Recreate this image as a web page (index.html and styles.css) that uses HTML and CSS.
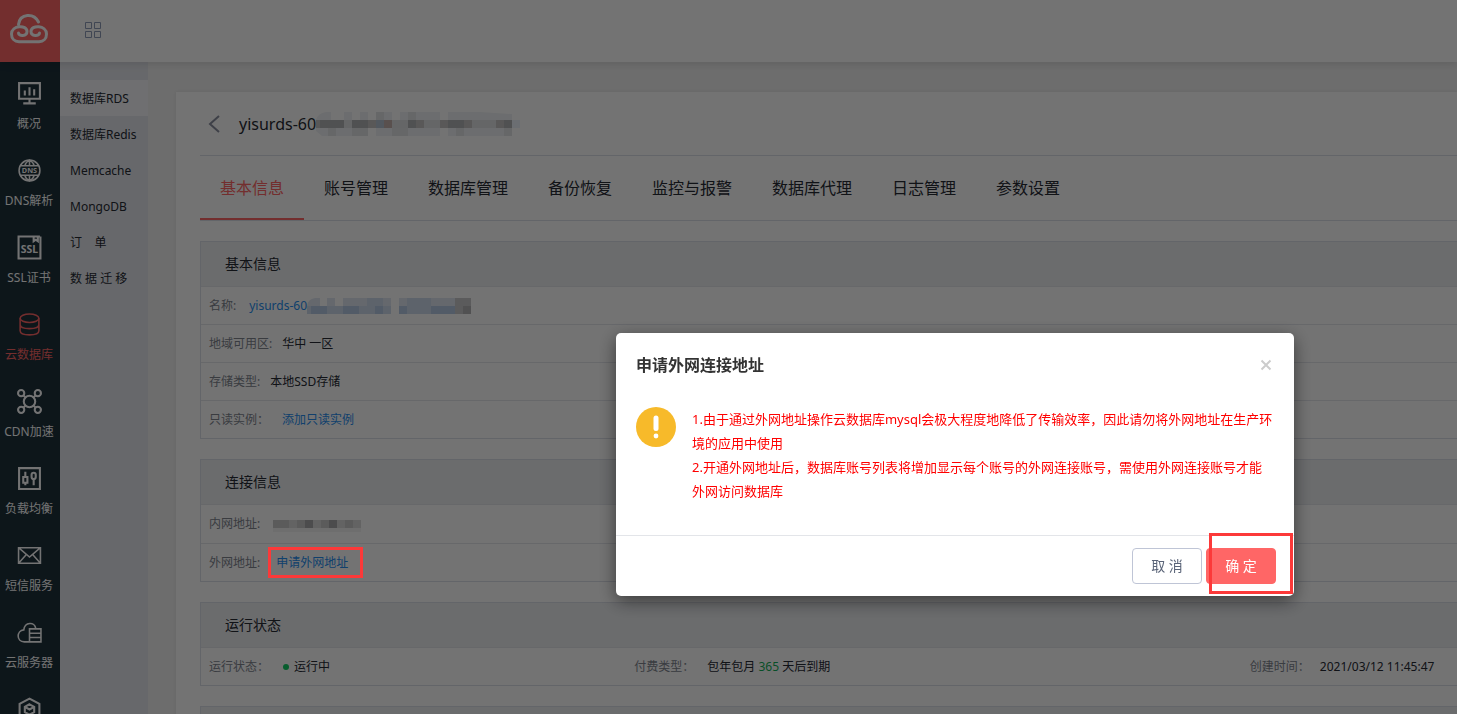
FILE: index.html
```html
<!DOCTYPE html>
<html lang="zh-CN">
<head>
<meta charset="utf-8">
<title>云数据库 - 基本信息</title>
<link rel="stylesheet" href="styles.css">
</head>
<body>
<header class="topbar">
  <a class="logo" href="#" aria-label="首页">
    <svg width="60" height="62" viewBox="0 0 60 62" fill="none" stroke="#fff" stroke-width="3" stroke-linecap="round" stroke-linejoin="round"><path d="M18.500 24.500C20 13 34 13 38.500 22M18.500 33c0 3.500 8.500 3.500 8.500-1.500 0-7-15.500-6.500-15.500 2.500 0 4.500 3 7.700 7.500 7.700h20c4.500 0 7.500-3.200 7.500-7.700 0-9-15.500-9.500-15.500-2.500 0 5 8.500 5 8.500 1.500"/></svg>
  </a>
  <button class="grid-btn" type="button" aria-label="产品导航">
    <svg width="16" height="16" viewBox="0 0 16 16" fill="none" stroke="#8f9bb8"><path d="M.5.500h6v6h-6zM9.500.500h6v6h-6zM.5 9.500h6v6h-6zM9.500 9.500h6v6h-6z"/></svg>
  </button>
</header>
<div class="body">
  <nav class="side" aria-label="产品">
    <a href="#"><svg viewBox="0 0 24 24"><path d="M2 2h20v15H2zM12 17v4M6 21.500h12M7.500 9v5M12 6v8M16.500 8v6"/></svg>概况</a>
    <a href="#"><svg viewBox="0 0 24 24" class="thin"><circle cx="12" cy="12" r="10"/><path d="M12 2v5.500M12 16.500V22M3.500 7.500h17M3.500 16.500h17M7.500 7.500C8 5 10 3 12 2c2 1 4 3 4.500 5.500M7.500 16.500c.5 2.500 2.500 4.500 4.500 5.500 2-1 4-3 4.500-5.500"/><text x="12" y="14.500" class="dns">DNS</text></svg>DNS解析</a>
    <a href="#"><svg viewBox="0 0 24 24"><path d="M22 1.500H1.500v21h21v-21M16 2v4l2-1.500L20 6V2"/><text x="12" y="17" class="ssl">SSL</text></svg>SSL证书</a>
    <a href="#" class="on"><svg viewBox="0 0 24 24"><ellipse cx="12" cy="6" rx="9" ry="4"/><path d="M3 6v12c0 5.300 18 5.300 18 0V6M3 12c0 5.300 18 5.300 18 0"/></svg>云数据库</a>
    <a href="#"><svg viewBox="0 0 24 24"><circle cx="12" cy="12" r="5.500"/><circle cx="4" cy="4" r="3"/><circle cx="20" cy="4" r="3"/><circle cx="4" cy="20" r="3"/><circle cx="20" cy="20" r="3"/><path d="M6 6l2 2M18 6l-2 2M6 18l2-2M18 18l-2-2"/></svg>CDN加速</a>
    <a href="#"><svg viewBox="0 0 24 24"><path d="M2 2h20v20H2zM8 5.500v5M8 16v2.500M6 10.500h4V16H6zM16 13.500v5"/><rect x="14" y="6.500" width="4" height="6" rx="2"/></svg>负载均衡</a>
    <a href="#"><svg viewBox="0 0 24 24" class="thin"><path d="M1.500 4.500h21v15h-21zM1.500 4.500L12 13.500l10.500-9M1.500 19.500L9 11M22.500 19.500L15 11"/></svg>短信服务</a>
    <a href="#"><svg viewBox="0 0 24 24" class="thin"><path d="M12 21H7C-1 21-.5 10 6.500 9.500 7.500 1.500 17 1.500 18 8M12 8.500h11V21H12zM12 12.700h11M12 16.800h11"/></svg>云服务器</a>
    <a href="#" aria-label="容器服务"><svg viewBox="0 0 24 24"><path d="M12 1.500l9.500 5V18L12 23l-9.500-5V6.500z"/><path d="M12 7l4.500 2.500v5L12 17l-4.500-2.500v-5zM7.500 9.500L12 12l4.500-2.500"/></svg></a>
  </nav>
  <nav class="sub" aria-label="云数据库">
    <a href="#" class="on">数据库RDS</a>
    <a href="#">数据库Redis</a>
    <a href="#">Memcache</a>
    <a href="#">MongoDB</a>
    <a href="#">订&nbsp;&nbsp;&nbsp;&nbsp;单</a>
    <a href="#">数 据 迁 移</a>
  </nav>
  <main class="main">
    <div class="card">
      <div class="title-row">
        <button class="back" type="button" aria-label="返回"><svg width="12" height="18" viewBox="0 0 12 18" fill="none" stroke="#8a8f9f" stroke-width="2"><path d="M11 1L2 9l9 8"/></svg></button>
        <h1>yisurds-60</h1>
        <svg class="mosaic" width="204" height="24" viewBox="0 0 204 24">
          <path fill="#eff2f5" d="M10 0h5v8H0q2-7 10-8zM28 0h8v8h-8zM44 0h8v8h-8zM60 0h16v8H60zM84 0h40v8H84zM132 0h32l32 2v6h-64zM0 16h12v8H6l-6-5zM20 16h32v8H20zM60 16h64v8H60zM132 16h64v8h-64z"/>
          <path fill="#e3e4e6" d="M60 0h8v8h-8zM92 0h8v8h-8zM12 16h8v8h-8zM36 16h16v8H36zM76 16h16v8H76zM140 16h8v8h-8zM188 16h8v8h-8z"/>
          <path fill="#dfe2e5" d="M28 8h8v8h-8zM76 8h16v8H76zM108 8h16v8h-16zM148 8h48v8h-48z"/>
          <path fill="#c5c4c4" d="M0 8h4v8H0zM52 8h8v8h-8zM100 8h8v8h-8zM124 8h8v8h-8zM148 8h8v8h-8zM180 8h8v8h-8z"/>
          <path fill="#b2b3b6" d="M4 8h24v8H4zM36 8h16v8H36zM92 8h8v8h-8zM132 8h16v8h-16zM188 8h8v8h-8z"/>
          <path fill="#b5c4d2" d="M60 8h8v8h-8z"/><path fill="#c6b1ae" d="M68 8h8v8h-8z"/><path fill="#eef4fc" d="M196 8h8v8h-8z"/>
        </svg>
      </div>
      <nav class="tabs" aria-label="实例">
        <a href="#" class="on">基本信息</a><a href="#">账号管理</a><a href="#">数据库管理</a><a href="#">备份恢复</a><a href="#">监控与报警</a><a href="#">数据库代理</a><a href="#">日志管理</a><a href="#">参数设置</a>
      </nav>
      <section class="panel">
        <h2>基本信息</h2>
        <div class="row"><span class="label wide">名称:</span><a href="#">yisurds-60</a>
          <svg class="mosaic" width="164" height="16" viewBox="0 0 164 16">
            <path fill="#dfe6f1" d="M8 0h5v8H0q1-7 8-8zM20 0h8v8h-8zM36 0h48v8H36zM92 0h56v8H92z"/>
            <path fill="#cfdced" d="M60 0h16v8H60zM100 0h24v8h-24zM0 8h84v8H0zM92 8h56v8H92z"/>
            <path fill="#b6cbe5" d="M4 8h16v8H4zM36 8h16v8H36zM68 8h8v8h-8zM92 8h8v8h-8zM124 8h24v8h-24z"/>
            <path fill="#cbcbcd" d="M148 0h16v16h-16z"/><path fill="#b3b3b6" d="M156 8h8v8h-8z"/>
          </svg></div>
        <div class="row"><span class="label">地域可用区:</span><span>华中 一区</span></div>
        <div class="row"><span class="label">存储类型:</span><span>本地SSD存储</span></div>
        <div class="row"><span class="label wide">只读实例：</span><a href="#">添加只读实例</a></div>
      </section>
      <section class="panel">
        <h2>连接信息</h2>
        <div class="row tall"><span class="label wide">内网地址:</span>
          <svg class="mosaic" width="88" height="16" viewBox="0 0 88 16">
            <path fill="#dcdcdc" d="M0 4h88v8H0z"/><path fill="#f4f4f4" d="M0 12h88v4H0z"/>
            <path fill="#cacaca" d="M0 4h16v8H0zM24 4h8v8h-8zM48 4h8v8h-8zM72 4h8v8h-8z"/><path fill="#a9a9ab" d="M32 4h8v8h-8zM56 4h8v8h-8z"/>
          </svg></div>
        <div class="row"><span class="label">外网地址:</span><span class="marked link-mark"><a href="#">申请外网地址</a></span></div>
      </section>
      <section class="panel">
        <h2>运行状态</h2>
        <div class="row cols">
          <div><span class="label">运行状态：</span><span class="state">运行中</span></div>
          <div><span class="label wide">付费类型：</span><span>包年包月 <b class="days">365</b> 天后到期</span></div>
          <div><span class="label">创建时间：</span><span>2021/03/12 11:45:47</span></div>
        </div>
      </section>
      <section class="panel" aria-label="配置信息">
        <div class="panel-head"></div>
      </section>
    </div>
  </main>
</div>
<div class="overlay">
  <div class="dialog" role="dialog" aria-modal="true" aria-labelledby="dlg-title">
    <div class="dialog-head">
      <h2 id="dlg-title">申请外网连接地址</h2>
      <button class="close" type="button" aria-label="关闭"><svg width="12" height="12" viewBox="0 0 12 12" stroke="#ccc" stroke-width="2"><path d="M1.500 1.500l9 9M10.500 1.500l-9 9"/></svg></button>
    </div>
    <div class="dialog-body">
      <svg class="warn" width="40" height="40" viewBox="0 0 40 40"><circle cx="20" cy="20" r="20" fill="#f7ba2a"/><path d="M20 11v10.500" stroke="#fff" stroke-width="5" stroke-linecap="round"/><circle cx="20" cy="29" r="2.400" fill="#fff"/></svg>
      <div class="msg">
        <p>1.由于通过外网地址操作云数据库mysql会极大程度地降低了传输效率，因此请勿将外网地址在生产环境的应用中使用</p>
        <p>2.开通外网地址后，数据库账号列表将增加显示每个账号的外网连接账号，需使用外网连接账号才能外网访问数据库</p>
      </div>
    </div>
    <div class="dialog-foot">
      <button class="btn" type="button">取 消</button>
      <span class="marked ok-mark"><button class="btn primary" type="button">确 定</button></span>
    </div>
  </div>
</div>
</body>
</html>
```

FILE: styles.css
```css
* { box-sizing: border-box; }
body {
  margin: 0;
  height: 100vh;
  overflow: hidden;
  display: flex;
  flex-direction: column;
  font: 12px/18px "Noto Sans", "Noto Sans CJK SC", sans-serif;
  color: #262a33;
  background: #f2f2f2;
}
a { color: inherit; text-decoration: none; }
h1, h2, p { margin: 0; font-weight: 400; }
button { font: inherit; cursor: pointer; }
svg { flex: none; display: block; }

.topbar {
  display: flex;
  align-items: center;
  flex: none;
  height: 62px;
  background: #fff;
  box-shadow: 0 2px 8px rgba(0, 0, 0, .12);
  z-index: 1;
}
.logo { background: #ff6666; }
.grid-btn { margin-left: 25px; padding: 0 0 3px; border: 0; background: none; }

.body { display: flex; flex: 1; min-height: 0; }
.side {
  flex: none;
  width: 60px;
  padding-top: 19px;
  overflow: hidden;
  background: #1d313b;
}
.side a {
  display: flex;
  flex-direction: column;
  align-items: center;
  gap: 9px;
  height: 77px;
  padding-right: 2px;
  color: #fff;
  white-space: nowrap;
}
.side svg { width: 25px; height: 25px; fill: none; stroke: currentColor; stroke-width: 2; }
.side .on svg { stroke-width: 1.5; }
.side svg.thin { stroke-width: 1.5; }
.side .on { color: #ff6666; }
.side .dns, .side .ssl { fill: currentColor; stroke: none; text-anchor: middle; font-weight: 700; }
.side .dns { font-size: 7px; }
.side .ssl { font-size: 10px; }

.sub { flex: none; width: 88px; padding-top: 18px; background: #e5e7ed; }
.sub a { display: block; padding: 1px 0 0 10px; line-height: 35px; white-space: nowrap; }
.sub .on { background: #f5f6fa; }

.main { flex: 1; min-width: 0; padding: 30px 0 0 28px; }
.card { padding-left: 24px; background: #fff; box-shadow: 0 0 4px rgba(0, 0, 0, .08); }
.title-row {
  display: flex;
  align-items: center;
  height: 64px;
  padding-left: 8px;
  border-bottom: 1px solid #dcdfe8;
}
.back { margin-right: 19px; padding: 0; border: 0; background: none; }
.title-row h1 { font-size: 16px; }

.tabs { display: flex; border-bottom: 1px solid #dcdfe8; font-size: 16px; }
.tabs a { padding: 2px 20px 0; line-height: 60px; border-bottom: 2px solid transparent; white-space: nowrap; }
.tabs .on { color: #ff6666; border-color: #ff6666; }

.panel { margin-top: 20px; border: 1px solid #dcdfe8; border-right: 0; }
.panel h2 {
  padding-left: 24px;
  font-size: 14px;
  line-height: 44px;
}
.panel h2, .panel-head { height: 44px; background: #edeff2; }
.row {
  display: flex;
  align-items: center;
  height: 38px;
  padding-left: 8px;
  border-top: 1px solid #e4e6ec;
  white-space: nowrap;
}
.tall { height: 39px; }
.label { margin-right: 10px; color: #80858f; }
.label.wide { margin-right: 13px; }
.row a { color: #268ef0; }
.cols { display: grid; grid-template-columns: 425fr 615fr 207fr; }
.cols > div { display: flex; min-width: 0; }
.state { display: flex; align-items: center; gap: 5px; margin-left: 4px; }
.state::before { content: ""; width: 6px; height: 6px; border-radius: 50%; background: #13ce66; }
.days { font-weight: 400; color: #13b058; }

.marked { position: relative; }
.marked::after {
  content: "";
  position: absolute;
  z-index: 20;
  border: 3px solid #fc3939;
  pointer-events: none;
}
.link-mark { margin-left: 6px; }
.link-mark::after { inset: -7px -15px -6px -8px; }
.ok-mark::after { inset: -15px -17px -10px 3px; }

.overlay {
  position: fixed;
  inset: 0;
  z-index: 10;
  display: flex;
  justify-content: flex-end;
  align-items: flex-start;
  padding: 333px 163px 0 0;
  background: rgba(0, 0, 0, .55);
}
.dialog {
  width: 678px;
  border-radius: 5px;
  background: #fff;
  box-shadow: 0 5px 18px rgba(0, 0, 0, .5);
}
.dialog-head {
  display: flex;
  justify-content: space-between;
  align-items: center;
  padding: 20px 22px 0 20px;
}
.dialog-head h2 { font-size: 16px; line-height: 24px; font-weight: 700; color: #333; }
.close { padding: 0; border: 0; background: none; }
.dialog-body {
  display: flex;
  gap: 16px;
  padding: 30px 20px 32px;
  font-size: 13px;
  line-height: 24px;
  color: #f00;
}
.dialog-foot {
  display: flex;
  justify-content: flex-end;
  gap: 4px;
  padding: 12px 18px;
  border-top: 1px solid #e3e5e9;
}
.btn {
  display: block;
  width: 70px;
  height: 36px;
  padding: 0;
  font-size: 14px;
  color: #5a6478;
  background: #fff;
  border: 1px solid #bfc5d6;
  border-radius: 4px;
}
.primary { color: #fff; background: #ff6666; border-color: #ff6666; }
```
